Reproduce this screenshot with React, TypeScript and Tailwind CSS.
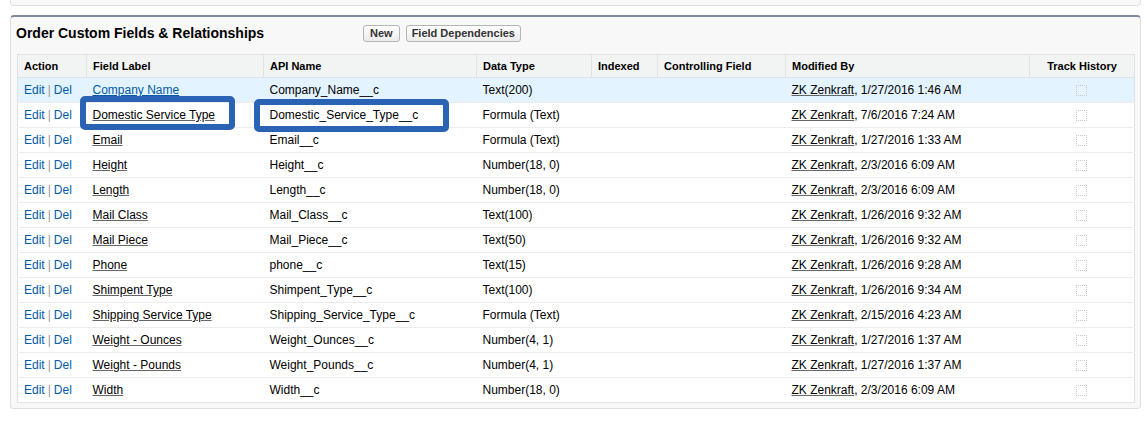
import React from "react";

type Row = { label: string; api: string; type: string; by: string };

const rows: Row[] = [
  { label: "Company Name", api: "Company_Name__c", type: "Text(200)", by: "1/27/2016 1:46 AM" },
  { label: "Domestic Service Type", api: "Domestic_Service_Type__c", type: "Formula (Text)", by: "7/6/2016 7:24 AM" },
  { label: "Email", api: "Email__c", type: "Formula (Text)", by: "1/27/2016 1:33 AM" },
  { label: "Height", api: "Height__c", type: "Number(18, 0)", by: "2/3/2016 6:09 AM" },
  { label: "Length", api: "Length__c", type: "Number(18, 0)", by: "2/3/2016 6:09 AM" },
  { label: "Mail Class", api: "Mail_Class__c", type: "Text(100)", by: "1/26/2016 9:32 AM" },
  { label: "Mail Piece", api: "Mail_Piece__c", type: "Text(50)", by: "1/26/2016 9:32 AM" },
  { label: "Phone", api: "phone__c", type: "Text(15)", by: "1/26/2016 9:28 AM" },
  { label: "Shimpent Type", api: "Shimpent_Type__c", type: "Text(100)", by: "1/26/2016 9:34 AM" },
  { label: "Shipping Service Type", api: "Shipping_Service_Type__c", type: "Formula (Text)", by: "2/15/2016 4:23 AM" },
  { label: "Weight - Ounces", api: "Weight_Ounces__c", type: "Number(4, 1)", by: "1/27/2016 1:37 AM" },
  { label: "Weight - Pounds", api: "Weight_Pounds__c", type: "Number(4, 1)", by: "1/27/2016 1:37 AM" },
  { label: "Width", api: "Width__c", type: "Number(18, 0)", by: "2/3/2016 6:09 AM" },
];

const headers = [
  { t: "Action", w: "w-[69px]" },
  { t: "Field Label", w: "w-[177px]" },
  { t: "API Name", w: "w-[213px]" },
  { t: "Data Type", w: "w-[115px]" },
  { t: "Indexed", w: "w-[66px]" },
  { t: "Controlling Field", w: "w-[128px]" },
  { t: "Modified By", w: "w-[244px]" },
  { t: "Track History", w: "w-[105px]" },
];

export default function App() {
  return (
    <div
      className="relative w-[1147px] h-[443px] bg-white text-black"
      style={{ fontFamily: '"Liberation Sans", Arial, sans-serif' }}
    >
      <div className="mx-[10px] w-[1131px] h-[6px] bg-[#f8f8f8] border border-t-0 border-[#e0e0e0] rounded-b-[4px]" />
      <div className="mx-[10px] mt-[9px] w-[1131px] bg-[#f8f8f8] border border-[#e0e0e0] border-t-[2px] border-t-[#7f8a9b] rounded-[4px] pb-[5px]">
        <div className="flex items-center h-[37px] pl-[5px]">
          <div className="w-[347px] -mt-[6px] text-[14px] font-bold leading-none">
            Order Custom Fields &amp; Relationships
          </div>
          <div className="flex gap-[6px] -mt-[4px]">
            <button className="h-[17px] px-[6px] text-[11px] font-bold leading-none text-[#333] border border-[#b5b5b5] rounded-[3px] bg-gradient-to-b from-white to-[#ececec]">
              New
            </button>
            <button className="h-[17px] px-[5px] text-[11px] font-bold leading-none text-[#333] border border-[#b5b5b5] rounded-[3px] bg-gradient-to-b from-white to-[#ececec]">
              Field Dependencies
            </button>
          </div>
        </div>
        <table className="ml-[6px] w-[1117px] table-fixed border-collapse bg-white border border-[#e0e3e5] text-[12px]">
          <thead>
            <tr className="h-[23px] bg-[#f2f3f3]">
              {headers.map((h, i) => (
                <th
                  key={h.t}
                  className={`${h.w} text-[11px] font-bold text-black align-middle border-b border-[#e0e3e5] ${
                    i > 0 ? "border-l border-l-[#e0e3e5]" : ""
                  } ${i === 7 ? "text-center" : "text-left px-[6px]"}`}
                >
                  {h.t}
                </th>
              ))}
            </tr>
          </thead>
          <tbody>
            {rows.map((r, i) => (
              <tr
                key={r.label}
                className={`h-[25px] ${i === 0 ? "bg-[#e3f3ff]" : "bg-white"} ${
                  i < rows.length - 1 ? "border-b border-[#ececec]" : ""
                }`}
              >
                <td className="px-[6px] whitespace-nowrap">
                  <span className="text-[#015ba7]">Edit</span>
                  <span className="text-[#999] px-[3px]">|</span>
                  <span className="text-[#015ba7]">Del</span>
                </td>
                <td className="px-[6px] whitespace-nowrap">
                  <span
                    className={
                      i === 0
                        ? "text-[#015ba7] underline decoration-[#015ba7]"
                        : "text-black underline decoration-[#666]"
                    }
                  >
                    {r.label}
                  </span>
                </td>
                <td className="px-[6px] whitespace-nowrap">{r.api}</td>
                <td className="px-[6px] whitespace-nowrap">{r.type}</td>
                <td className="px-[6px]"></td>
                <td className="px-[6px]"></td>
                <td className="px-[6px] whitespace-nowrap">
                  <span className="underline decoration-[#666]">ZK Zenkraft</span>, {r.by}
                </td>
                <td className="text-center">
                  <span className="inline-block align-middle w-[11px] h-[11px] border border-dotted border-[#c8c8c8] rounded-[1px]" />
                </td>
              </tr>
            ))}
          </tbody>
        </table>
      </div>

      <div className="absolute left-[80px] top-[96px] w-[155px] h-[34px] border-[6px] border-[#2a62b4] rounded-[5px]" />
      <div className="absolute left-[254px] top-[99px] w-[195px] h-[33px] border-[6px] border-[#2a62b4] rounded-[5px]" />
    </div>
  );
}
